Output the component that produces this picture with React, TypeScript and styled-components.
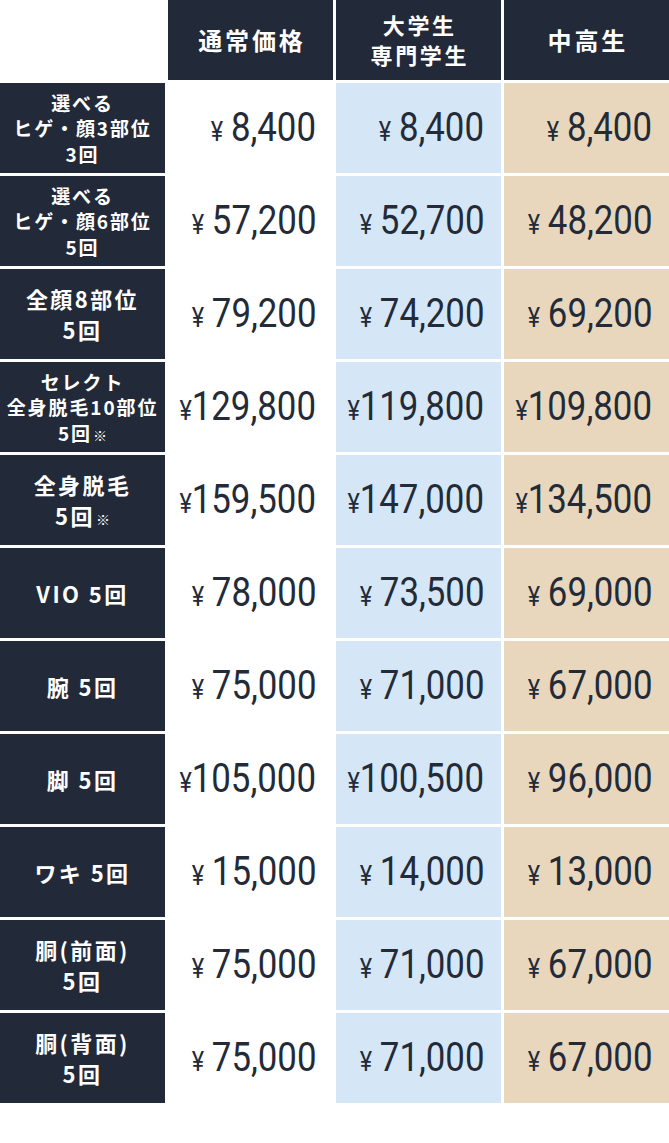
import React from 'react';
import styled, { createGlobalStyle } from 'styled-components';

const GlobalStyle = createGlobalStyle`
  html, body {
    margin: 0;
    padding: 0;
    background: #ffffff;
  }
  body {
    font-family: 'Noto Sans CJK JP', 'Noto Sans', sans-serif;
  }
`;

const PriceTable = styled.div`
  display: grid;
  grid-template-columns: repeat(4, 165px);
  grid-template-rows: 80px;
  grid-auto-rows: 90px;
  gap: 3px;
  width: 669px;
`;

const EmptyCell = styled.div`
  background: #ffffff;
`;

const HeadCell = styled.div<{ $small?: boolean }>`
  display: flex;
  align-items: center;
  justify-content: center;
  text-align: center;
  background: #222a39;
  color: #ffffff;
  font-family: 'Noto Sans CJK JP', sans-serif;
  font-weight: 700;
  font-size: ${(p) => (p.$small ? '22px' : '24px')};
  line-height: 1.36;
  letter-spacing: 0.12em;
  padding-left: 0.12em;
`;

const LabelCell = styled.div<{ $small?: boolean }>`
  display: flex;
  align-items: center;
  justify-content: center;
  text-align: center;
  background: #222a39;
  color: #ffffff;
  font-family: 'Noto Sans CJK JP', sans-serif;
  font-weight: 700;
  font-size: ${(p) => (p.$small ? '19px' : '22px')};
  line-height: ${(p) => (p.$small ? '1.34' : '1.4')};
  letter-spacing: ${(p) => (p.$small ? '0.1em' : '0.11em')};
  white-space: nowrap;
`;

const LabelText = styled.div`
  display: block;
`;

const Note = styled.span`
  font-size: 14px;
  font-weight: 400;
  letter-spacing: 0;
  margin-left: 1px;
`;

const PriceCell = styled.div<{ $tone: 'white' | 'blue' | 'beige' }>`
  display: flex;
  align-items: center;
  justify-content: flex-end;
  padding-right: 17px;
  background: ${(p) =>
    p.$tone === 'blue' ? '#d5e7f6' : p.$tone === 'beige' ? '#e8d7bd' : '#ffffff'};
  color: #232a38;
  font-family: Roboto, 'Liberation Sans', sans-serif;
`;

const PriceText = styled.span`
  display: inline-flex;
  align-items: baseline;
  transform: scaleX(0.87);
  transform-origin: right center;
  white-space: nowrap;
`;

const Amount = styled.span`
  font-size: 40px;
  line-height: 1;
  letter-spacing: 0;
`;

const Yen = styled.span<{ $tight?: boolean }>`
  font-size: 27px;
  line-height: 1;
  margin-right: ${(p) => (p.$tight ? '0px' : '9px')};
`;

type Row = {
  label: React.ReactNode;
  small?: boolean;
  prices: [string, string, string];
};

const rows: Row[] = [
  {
    label: (
      <>
        選べる
        <br />
        ヒゲ・顔3部位
        <br />
        3回
      </>
    ),
    small: true,
    prices: ['8,400', '8,400', '8,400'],
  },
  {
    label: (
      <>
        選べる
        <br />
        ヒゲ・顔6部位
        <br />
        5回
      </>
    ),
    small: true,
    prices: ['57,200', '52,700', '48,200'],
  },
  {
    label: (
      <>
        全顔8部位
        <br />
        5回
      </>
    ),
    prices: ['79,200', '74,200', '69,200'],
  },
  {
    label: (
      <>
        セレクト
        <br />
        全身脱毛10部位
        <br />
        5回<Note>※</Note>
      </>
    ),
    small: true,
    prices: ['129,800', '119,800', '109,800'],
  },
  {
    label: (
      <>
        全身脱毛
        <br />
        5回<Note>※</Note>
      </>
    ),
    prices: ['159,500', '147,000', '134,500'],
  },
  { label: 'VIO 5回', prices: ['78,000', '73,500', '69,000'] },
  { label: '腕 5回', prices: ['75,000', '71,000', '67,000'] },
  { label: '脚 5回', prices: ['105,000', '100,500', '96,000'] },
  { label: 'ワキ 5回', prices: ['15,000', '14,000', '13,000'] },
  {
    label: (
      <>
        胴(前面)
        <br />
        5回
      </>
    ),
    prices: ['75,000', '71,000', '67,000'],
  },
  {
    label: (
      <>
        胴(背面)
        <br />
        5回
      </>
    ),
    prices: ['75,000', '71,000', '67,000'],
  },
];

const tones: Array<'white' | 'blue' | 'beige'> = ['white', 'blue', 'beige'];

const App = () => {
  return (
    <>
      <GlobalStyle />
      <PriceTable>
        <EmptyCell />
        <HeadCell>
          <LabelText>通常価格</LabelText>
        </HeadCell>
        <HeadCell $small>
          <LabelText>
            大学生
            <br />
            専門学生
          </LabelText>
        </HeadCell>
        <HeadCell>
          <LabelText>中高生</LabelText>
        </HeadCell>

        {rows.map((row, i) => (
          <React.Fragment key={i}>
            <LabelCell $small={row.small}>
              <LabelText>{row.label}</LabelText>
            </LabelCell>
            {row.prices.map((price, j) => (
              <PriceCell key={j} $tone={tones[j]}>
                <PriceText>
                  <Yen $tight={price.length > 6}>¥</Yen>
                  <Amount>{price}</Amount>
                </PriceText>
              </PriceCell>
            ))}
          </React.Fragment>
        ))}
      </PriceTable>
    </>
  );
};

export default App;
